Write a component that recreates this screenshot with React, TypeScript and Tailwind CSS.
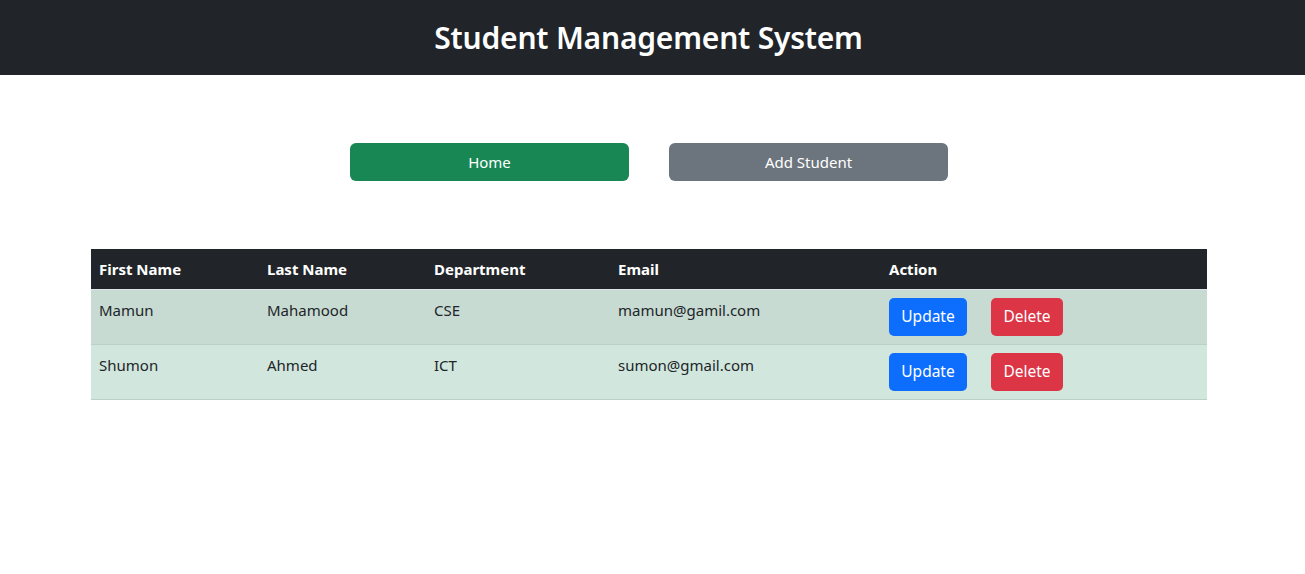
const students = [
  { first: 'Mamun', last: 'Mahamood', dept: 'CSE', email: 'mamun@gamil.com', bg: 'bg-[#c7dbd2]' },
  { first: 'Shumon', last: 'Ahmed', dept: 'ICT', email: 'sumon@gmail.com', bg: 'bg-[#d1e7dd]' },
]

export default function App() {
  return (
    <div className="min-h-[574px] bg-white text-[#212529] font-['Noto_Sans',sans-serif]">
      {/* Header */}
      <header className="h-[75px] bg-[#212529] flex items-center justify-center pr-2">
        <h1 className="text-[30px] font-semibold text-white tracking-[-0.2px]">Student Management System</h1>
      </header>

      {/* Nav buttons */}
      <div className="flex justify-center gap-10 pr-[7px] mt-[68px]">
        <button className="w-[279px] h-[38px] rounded-md bg-[#198754] text-white text-[15px]">Home</button>
        <button className="w-[279px] h-[38px] rounded-md bg-[#6c757d] text-white text-[15px]">Add Student</button>
      </div>

      {/* Table */}
      <div className="mt-[68px] px-[91px] pr-[98px]">
        <table className="w-full border-collapse text-[15px]">
          <thead>
            <tr className="bg-[#212529] text-white font-bold text-left border-b border-[#dee2e6]">
              <th className="w-[168px] h-[40px] px-2 font-bold">First Name</th>
              <th className="w-[167px] px-2 font-bold">Last Name</th>
              <th className="w-[184px] px-2 font-bold">Department</th>
              <th className="w-[271px] px-2 font-bold">Email</th>
              <th className="px-2 font-bold">Action</th>
            </tr>
          </thead>
          <tbody>
            {students.map((s) => (
              <tr key={s.email} className={`${s.bg} border-b border-[#bcd0c7] align-top`}>
                <td className="px-2 pt-2 leading-6">{s.first}</td>
                <td className="px-2 pt-2 leading-6">{s.last}</td>
                <td className="px-2 pt-2 leading-6">{s.dept}</td>
                <td className="px-2 pt-2 leading-6">{s.email}</td>
                <td className="px-2 py-2">
                  <div className="flex gap-6">
                    <button className="w-[78px] h-[38px] rounded-[5px] bg-[#0d6efd] text-white text-[15.5px]">Update</button>
                    <button className="w-[72px] h-[38px] rounded-[5px] bg-[#dc3545] text-white text-[15.5px]">Delete</button>
                  </div>
                </td>
              </tr>
            ))}
          </tbody>
        </table>
      </div>
    </div>
  )
}
